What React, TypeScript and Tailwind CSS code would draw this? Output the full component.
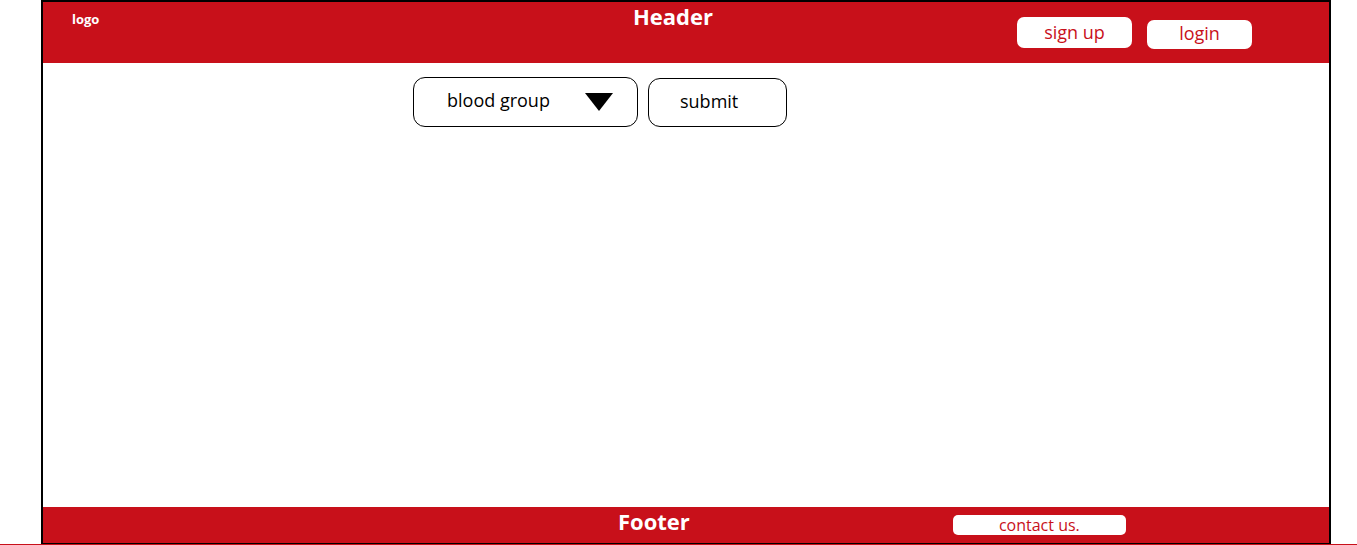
export default function App() {
  return (
    <div className="w-[1357px] h-[545px] bg-white overflow-hidden" style={{ fontFamily: '"Open Sans", sans-serif' }}>
      {/* Page frame */}
      <div className="ml-[41px] w-[1290px] h-[544px] border-l-[2px] border-r-[2px] border-t-[2px] border-b border-black flex flex-col">
        {/* Header */}
        <header className="h-[61px] bg-[#c8101a] flex items-start">
          <div className="w-[590px] pl-[29px] pt-[11px] text-[13px] font-bold text-white leading-none">logo</div>
          <div className="pt-[1px] text-[22px] font-bold text-white leading-tight">Header</div>
          <div className="ml-auto mr-[77px] flex items-start gap-[15px]">
            <button className="mt-[15px] w-[115px] h-[31px] rounded-[7px] bg-white text-[#c8101a] text-[18px] leading-none pb-[2px]">
              sign up
            </button>
            <button className="mt-[18px] w-[105px] h-[29px] rounded-[7px] bg-white text-[#c8101a] text-[18px] leading-none pb-[4px]">
              login
            </button>
          </div>
        </header>

        {/* Main */}
        <main className="flex-1 bg-white">
          <div className="ml-[370px] mt-[14px] flex items-start gap-[10px]">
            <div className="w-[225px] h-[50px] rounded-[12px] border border-black flex items-center pl-[33px] pr-[24px]">
              <span className="text-[18px] text-black leading-none pb-[4px]">blood group</span>
              <svg className="ml-auto" width="28" height="18" viewBox="0 0 28 18">
                <polygon points="0,0 28,0 14,18" fill="#000" />
              </svg>
            </div>
            <button className="mt-px w-[139px] h-[49px] rounded-[12px] border border-black text-left pl-[31px] pb-[4px] text-[18px] text-black leading-none">
              submit
            </button>
          </div>
        </main>

        {/* Footer */}
        <footer className="h-[36px] bg-[#c8101a] flex items-start">
          <div className="w-[575px]" />
          <div className="pt-[1px] text-[22px] font-bold text-white leading-tight">Footer</div>
          <button className="ml-[263px] mt-[8px] w-[173px] h-[20px] rounded-[5px] bg-white text-[#c8101a] text-[16px] leading-none">
            contact us.
          </button>
        </footer>
      </div>
      <div className="h-px w-full bg-[#c8101a]" />
    </div>
  );
}
